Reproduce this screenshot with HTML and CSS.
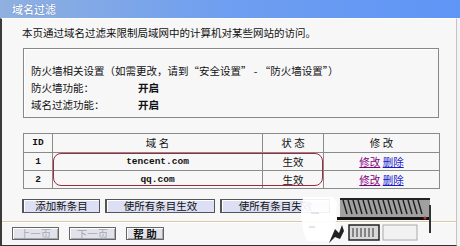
FILE: index.html
```html
<!DOCTYPE html>
<html lang="zh-CN">
<head>
  <meta charset="UTF-8" />
  <title>域名过滤</title>
  <link rel="stylesheet" href="styles.css">
</head>
<body>
  <div class="titlebar">域名过滤</div>
  <div class="panel">
    <p class="intro">本页通过域名过滤来限制局域网中的计算机对某些网站的访问。</p>

    <div class="fw-box">
      <p>防火墙相关设置（如需更改，请到“安全设置” - “防火墙设置”）</p>
      <div class="fw-row"><span>防火墙功能：</span><b>开启</b></div>
      <div class="fw-row"><span>域名过滤功能：</span><b>开启</b></div>
    </div>

    <div class="rules">
      <table>
        <colgroup>
          <col class="c-id"><col class="c-domain"><col class="c-state"><col class="c-edit">
        </colgroup>
        <tr class="head">
          <td class="mono">ID</td><td>域 名</td><td>状 态</td><td>修 改</td>
        </tr>
        <tr>
          <td class="mono">1</td><td class="mono">tencent.com</td><td>生效</td>
          <td><a class="visited" href="#">修改</a> <a href="#">删除</a></td>
        </tr>
        <tr>
          <td class="mono">2</td><td class="mono">qq.com</td><td>生效</td>
          <td><a class="visited" href="#">修改</a> <a href="#">删除</a></td>
        </tr>
      </table>
      <div class="mark"></div>
    </div>

    <div class="actions">
      <button class="b-add">添加新条目</button>
      <button class="b-all">使所有条目生效</button>
      <button class="b-all">使所有条目失效</button>
    </div>

    <div class="sep"></div>

    <div class="nav">
      <button class="b-nav" disabled>上一页</button>
      <button class="b-nav" disabled>下一页</button>
      <button class="b-help">帮 助</button>
    </div>

    <div class="watermark">
      <svg width="140" height="52" viewBox="0 0 140 52">
        <path d="M6 4h30l4 6-2 30-6 8H10l-4-10-2-18z" fill="#fff" opacity="0.92"/>
        <path d="M14 20h8M12 34h6" stroke="#e4e4e4" stroke-width="2"/>
        <rect x="43" y="5" width="90" height="22" fill="#a0a0a0"/>
        <g stroke="#1e1e1e" stroke-width="1.4">
          <path d="M46 7l4 14M51 7l4 14M56 7l4 14M61 7l4 14M66 7l4 14M71 7l4 14M76 7l4 14M81 7l4 14M86 7l4 14M91 7l4 14M96 7l4 14M101 7l4 14M106 7l4 14M111 7l4 14M116 7l4 14M121 7l4 14"/>
        </g>
        <rect x="43" y="5" width="90" height="2" fill="#222"/>
        <rect x="40" y="24" width="94" height="3" fill="#111"/>
        <circle cx="128" cy="25" r="1.5" fill="#b03030"/>
        <path d="M32 50l6-14 4 4 3-8 2 6-4 8 -5 -2z" fill="#222"/>
        <rect x="52" y="32" width="30" height="15" fill="#d8d8d8" stroke="#222" stroke-width="1.5"/>
        <path d="M56 35v9M60 35v9M64 35v9M68 35v9M72 35v9M76 35v9" stroke="#333"/>
        <rect x="86" y="32" width="34" height="15" fill="#f2f2f2" stroke="#aaa"/>
        <rect x="132" y="12" width="2" height="28" fill="#333"/>
      </svg>
    </div>
  </div>
</body>
</html>
```

FILE: styles.css
```css
body {
  margin: 0;
  width: 460px;
  height: 246px;
  overflow: hidden;
  background: #f4f4f4;
  font-family: "Noto Sans CJK SC", sans-serif;
  font-size: 10.5px;
  color: #111;
}

.titlebar {
  height: 18px;
  line-height: 18px;
  padding-left: 12px;
  background: linear-gradient(to right, #8fb0e0, #6e9ef0 50%, #5f95f6);
  color: #fff;
  font-size: 11px;
  font-weight: 500;
  text-shadow: 0 0 1px #3f64a8;
}

.panel {
  position: relative;
  width: 457px;
  height: 228px;
  box-sizing: border-box;
  padding: 7px 0 0 21px;
  background: #f7f7f7;
  border-top: 1px solid #fff;
  border-left: 2px solid #3a3a3a;
  border-right: 1px solid #c4c4c4;
  border-bottom: 1px solid #333;
}

p {
  margin: 0;
}

.intro {
  line-height: 14px;
  margin-left: -1px;
}

.fw-box {
  width: 416px;
  box-sizing: border-box;
  margin-top: 8px;
  padding: 13px 7px 4px;
  border: 1px solid #888;
  box-shadow: inset 1px 1px #fff;
  line-height: 17px;
}

.fw-row {
  display: grid;
  grid-template-columns: 107px auto;
}

.fw-row b {
  font-weight: bold;
}

.rules {
  position: relative;
  margin-top: 15px;
}

table {
  width: 416px;
  table-layout: fixed;
  border-collapse: collapse;
}

.c-id { width: 29px; }
.c-domain { width: 210px; }
.c-state { width: 61px; }
.c-edit { width: 116px; }

td {
  height: 17px;
  padding: 0;
  border: 1px solid #8a8a8a;
  text-align: center;
  line-height: 16px;
}

.head td {
  height: 18px;
}

.mono {
  font-family: "Liberation Mono", monospace;
  font-size: 9.5px;
  font-weight: bold;
}

a {
  color: #1a1acc;
}

a.visited {
  color: #800080;
}

.mark {
  position: absolute;
  left: 30px;
  top: 20px;
  width: 270px;
  height: 33px;
  box-sizing: border-box;
  border: 1px solid #a02a3c;
  border-radius: 8px;
}

button {
  padding: 0;
  font-family: inherit;
  font-size: 10.5px;
  line-height: 12px;
  color: #111;
  cursor: pointer;
}

.actions {
  display: flex;
  gap: 5px;
  margin-top: 10px;
  margin-left: -1px;
}

.b-add,
.b-all {
  height: 14px;
  background: #dde0f4;
  border: 1px solid #555;
  border-left-width: 2px;
  box-shadow: inset 1px 1px #fff;
}

.b-add { width: 78px; }
.b-all { width: 110px; }

.sep {
  margin: 8px 0 0 -21px;
  width: 454px;
  border-top: 1px solid #dcc8a4;
  border-bottom: 1px solid #fff;
}

.nav {
  display: flex;
  gap: 10px;
  margin: 4px 0 0 -11px;
}

.b-nav,
.b-help {
  height: 13px;
  line-height: 11px;
  background: #e2e3ea;
  border: 1px solid #666;
  box-shadow: inset 1px 1px #fff, inset -1px -1px #a8a8b0;
}

.b-nav {
  width: 47px;
  color: #a4a8b8;
}

.b-help {
  width: 38px;
  font-weight: bold;
}

.watermark {
  position: absolute;
  left: 295px;
  top: 174px;
  width: 140px;
  height: 52px;
}
```
